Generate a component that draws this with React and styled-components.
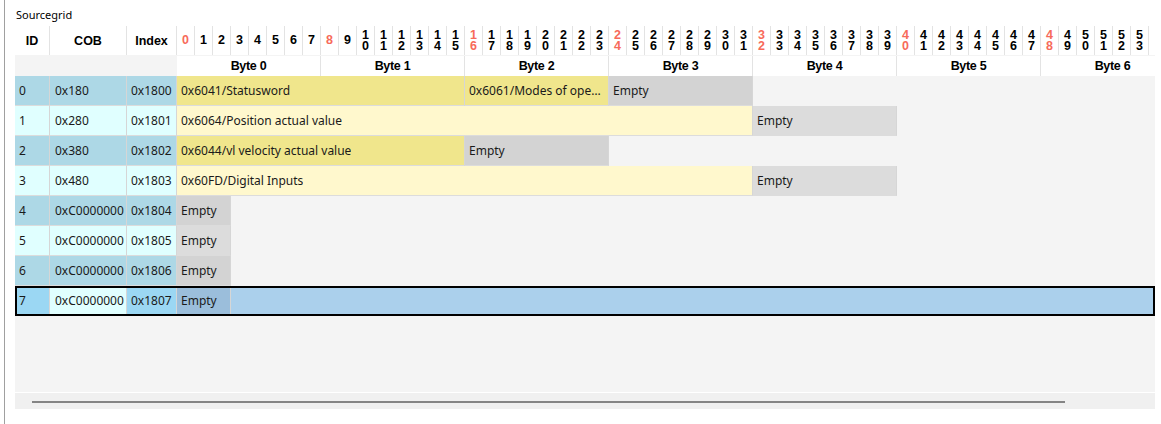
import React from "react";
import styled, { createGlobalStyle } from "styled-components";

const BIT_COUNT = 56;
const LABELLED_BITS = 54;
const COLS = `35px 77px 50px repeat(${BIT_COUNT}, 18px)`;

const rows = [
  {
    id: 0,
    cob: "0x180",
    index: "0x1800",
    tone: "dark",
    cells: [
      { text: "0x6041/Statusword", span: 16, kind: "khaki" },
      { text: "0x6061/Modes of operation display", span: 8, kind: "khaki" },
      { text: "Empty", span: 8, kind: "empty" },
    ],
  },
  {
    id: 1,
    cob: "0x280",
    index: "0x1801",
    tone: "light",
    cells: [
      { text: "0x6064/Position actual value", span: 32, kind: "chiffon" },
      { text: "Empty", span: 8, kind: "emptyLight" },
    ],
  },
  {
    id: 2,
    cob: "0x380",
    index: "0x1802",
    tone: "dark",
    cells: [
      { text: "0x6044/vl velocity actual value", span: 16, kind: "khaki" },
      { text: "Empty", span: 8, kind: "empty" },
    ],
  },
  {
    id: 3,
    cob: "0x480",
    index: "0x1803",
    tone: "light",
    cells: [
      { text: "0x60FD/Digital Inputs", span: 32, kind: "chiffon" },
      { text: "Empty", span: 8, kind: "emptyLight" },
    ],
  },
  {
    id: 4,
    cob: "0xC0000000",
    index: "0x1804",
    tone: "dark",
    cells: [{ text: "Empty", span: 3, kind: "empty" }],
  },
  {
    id: 5,
    cob: "0xC0000000",
    index: "0x1805",
    tone: "light",
    cells: [{ text: "Empty", span: 3, kind: "emptyLight" }],
  },
  {
    id: 6,
    cob: "0xC0000000",
    index: "0x1806",
    tone: "dark",
    cells: [{ text: "Empty", span: 3, kind: "empty" }],
  },
  {
    id: 7,
    cob: "0xC0000000",
    index: "0x1807",
    tone: "selected",
    cells: [{ text: "Empty", span: 3, kind: "emptySelected" }],
  },
];

const cellColors = {
  khaki: "#f0e68c",
  chiffon: "#fff8cd",
  empty: "#d3d3d3",
  emptyLight: "#dcdcdc",
  emptySelected: "#9bbedb",
};

const keyColors = {
  dark: { id: "#add8e6", cob: "#add8e6", index: "#add8e6" },
  light: { id: "#e0ffff", cob: "#e0ffff", index: "#e0ffff" },
  selected: { id: "#9bd7f3", cob: "#e0ffff", index: "#9bd7f3" },
};

function App() {
  const bits = Array.from({ length: BIT_COUNT }, (_, i) => i);
  const bytes = Array.from({ length: BIT_COUNT / 8 }, (_, i) => i);

  return (
    <Page>
      <GlobalStyle />
      <Panel>
        <Title>Sourcegrid</Title>
        <GridFrame>
          <Grid>
            <HeaderRow>
              <HeadCell>ID</HeadCell>
              <HeadCell>COB</HeadCell>
              <HeadCell>Index</HeadCell>
              {bits.map((b) => (
                <BitCell key={b} $mark={b % 8 === 0}>
                  {b < LABELLED_BITS &&
                    String(b)
                      .split("")
                      .map((d, i) => <span key={i}>{d}</span>)}
                </BitCell>
              ))}
            </HeaderRow>
            <ByteRow>
              <ByteSpacer />
              {bytes.map((b) => (
                <ByteCell key={b}>Byte {b}</ByteCell>
              ))}
            </ByteRow>
            {rows.map((row) => {
              const keys = keyColors[row.tone];
              return (
                <DataRow key={row.id} $selected={row.tone === "selected"}>
                  <KeyCell $bg={keys.id}>{row.id}</KeyCell>
                  <KeyCell $bg={keys.cob} $pad={5}>
                    {row.cob}
                  </KeyCell>
                  <KeyCell $bg={keys.index}>{row.index}</KeyCell>
                  {row.cells.map((c, i) => (
                    <MapCell key={i} $span={c.span} $bg={cellColors[c.kind]}>
                      <CellText>{c.text}</CellText>
                    </MapCell>
                  ))}
                </DataRow>
              );
            })}
            <Filler />
          </Grid>
          <ScrollTrack>
            <ScrollThumb />
          </ScrollTrack>
        </GridFrame>
      </Panel>
    </Page>
  );
}

export default App;

const GlobalStyle = createGlobalStyle`
  html, body {
    margin: 0;
    padding: 0;
    background: #ffffff;
  }
  body {
    font-family: "Segoe UI", "Noto Sans", "Liberation Sans", sans-serif;
    color: #1a1a1a;
  }
`;

const Page = styled.div`
  width: 1161px;
  height: 424px;
  padding-left: 4px;
  box-sizing: border-box;
  overflow: hidden;
`;

const Panel = styled.div`
  height: 424px;
  border-left: 1px solid #a0a0a0;
  padding-left: 10px;
  box-sizing: border-box;
  display: flex;
  flex-direction: column;
`;

const Title = styled.div`
  font-size: 11px;
  line-height: 14px;
  padding: 8px 0 4px 1px;
  color: #000;
`;

const GridFrame = styled.div`
  width: 1140px;
  display: flex;
  flex-direction: column;
`;

const Grid = styled.div`
  height: 366px;
  background: #f4f4f4;
  overflow: hidden;
  display: flex;
  flex-direction: column;
`;

const HeaderRow = styled.div`
  display: grid;
  grid-template-columns: ${COLS};
  height: 29px;
  background: #fff;
  flex-shrink: 0;
`;

const HeadCell = styled.div`
  display: flex;
  align-items: center;
  justify-content: center;
  font-family: "Liberation Sans", Arial, sans-serif;
  font-weight: bold;
  font-size: 12.5px;
  color: #000;
  border-right: 1px solid #e3e3e3;
`;

const BitCell = styled.div`
  display: flex;
  flex-direction: column;
  align-items: center;
  justify-content: center;
  font-family: "Liberation Sans", Arial, sans-serif;
  font-weight: bold;
  font-size: 12.5px;
  line-height: 10.5px;
  color: ${(p) => (p.$mark ? "#f76a5a" : "#000")};
  border-right: 1px solid #e3e3e3;
`;

const ByteRow = styled.div`
  display: grid;
  grid-template-columns: ${COLS};
  height: 20px;
  margin-top: 1px;
  flex-shrink: 0;
`;

const ByteSpacer = styled.div`
  grid-column: span 3;
`;

const ByteCell = styled.div`
  grid-column: span 8;
  background: #fff;
  display: flex;
  align-items: center;
  justify-content: center;
  font-family: "Liberation Sans", Arial, sans-serif;
  font-weight: bold;
  font-size: 12.5px;
  letter-spacing: -0.3px;
  color: #000;
  border-right: 1px solid #e3e3e3;
`;

const DataRow = styled.div`
  position: relative;
  display: grid;
  grid-template-columns: ${COLS};
  height: 30px;
  flex-shrink: 0;
  background: ${(p) => (p.$selected ? "#abd0ec" : "transparent")};

  &::after {
    content: "";
    display: ${(p) => (p.$selected ? "block" : "none")};
    position: absolute;
    inset: 0;
    border: 2px solid #000;
    pointer-events: none;
  }
`;

const KeyCell = styled.div`
  background: ${(p) => p.$bg};
  display: flex;
  align-items: center;
  padding-left: ${(p) => p.$pad ?? 4}px;
  font-size: 12px;
  white-space: nowrap;
  overflow: hidden;
  border-right: 1px solid #d6d6d6;
  border-bottom: 1px solid #dcdcdc;
`;

const MapCell = styled.div`
  grid-column: span ${(p) => p.$span};
  background: ${(p) => p.$bg};
  display: flex;
  align-items: center;
  padding: 0 5px 0 4px;
  min-width: 0;
  font-size: 12px;
  border-right: 1px solid #d6d6d6;
  border-bottom: 1px solid #dcdcdc;
`;

const CellText = styled.span`
  white-space: nowrap;
  overflow: hidden;
  text-overflow: ellipsis;
`;

const Filler = styled.div`
  flex: 1;
`;

const ScrollTrack = styled.div`
  height: 16px;
  margin-top: 1px;
  background: #f0f0f0;
  display: flex;
  align-items: center;
  padding-left: 17px;
`;

const ScrollThumb = styled.div`
  width: 1033px;
  height: 2px;
  margin-top: 1px;
  background: #858585;
`;
